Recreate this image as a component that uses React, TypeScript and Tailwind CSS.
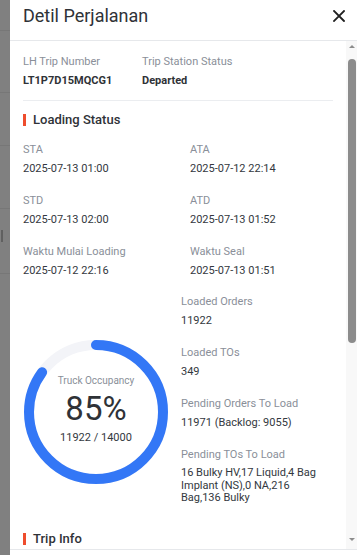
import React from "react";

const Label = ({ children }: { children: React.ReactNode }) => (
  <div className="text-[11px] leading-[14px] text-[#8a8f99]">{children}</div>
);
const Value = ({ children }: { children: React.ReactNode }) => (
  <div className="mt-[5px] text-[11px] leading-[14px] text-[#333840]">{children}</div>
);

const SectionTitle = ({ children }: { children: React.ReactNode }) => (
  <div className="flex items-center gap-[7px]">
    <div className="h-[12px] w-[3px] bg-[#ee4d2d]" />
    <div className="text-[13px] leading-[16px] font-medium text-[#2f3237]">{children}</div>
  </div>
);

function Ring() {
  const r = 67;
  const c = 2 * Math.PI * r;
  const pct = 0.85;
  return (
    <div className="relative h-[146px] w-[146px]">
      <svg width="146" height="146" viewBox="0 0 146 146" className="absolute inset-0">
        <circle cx="73" cy="73" r={r} fill="none" stroke="#f3f4f8" strokeWidth="10" />
        <circle
          cx="73"
          cy="73"
          r={r}
          fill="none"
          stroke="#3377f6"
          strokeWidth="10"
          strokeLinecap="round"
          strokeDasharray={`${c * pct} ${c}`}
          transform="rotate(-90 73 73)"
        />
      </svg>
      <div className="absolute inset-0 flex flex-col items-center justify-center">
        <div className="text-[10px] leading-[12px] text-[#8a8f99] -mt-[4px]">Truck Occupancy</div>
        <div className="mt-[4px] text-[33px] leading-[36px] text-[#2f3237]">85%</div>
        <div className="mt-[4px] text-[11px] leading-[14px] text-[#333840]">11922 / 14000</div>
      </div>
    </div>
  );
}

export default function App() {
  return (
    <div
      className="flex h-[555px] w-[357px] overflow-hidden"
      style={{ fontFamily: "Roboto, 'Noto Sans', sans-serif" }}
    >
      <div className="relative w-[10px] shrink-0 bg-[#808080]">
        <div className="absolute left-0 right-0 top-[30px] h-px bg-[#777]" />
        <div className="absolute left-0 right-0 top-[92px] h-px bg-[#777]" />
        <div className="absolute left-0 right-0 top-[145px] h-px bg-[#777]" />
        <div className="absolute left-0 right-0 top-[208px] h-px bg-[#777]" />
        <div className="absolute left-0 right-0 top-[273px] h-px bg-[#777]" />
        <div className="absolute left-[1px] top-[230px] h-[12px] w-[2px] bg-[#606060]" />
      </div>
      <div className="flex min-w-0 flex-1 flex-col bg-white">
        <div className="flex h-[41px] shrink-0 items-start justify-between border-b border-[#e6e8eb] pl-[13px] pr-[10px] pt-[5px]">
          <div className="text-[18px] leading-[22px] text-[#2f3237]">Detil Perjalanan</div>
          <svg width="12" height="12" viewBox="0 0 12 12" className="mr-[2px] mt-[5px]">
            <path d="M1 1L11 11M11 1L1 11" stroke="#1f1f1f" strokeWidth="1.8" strokeLinecap="square" />
          </svg>
        </div>
        <div className="flex min-h-0 flex-1">
          <div className="min-w-0 flex-1 px-[13px] pt-[14px]">
            <div className="flex border-b border-[#ebedf0] pb-[12px]">
              <div className="w-[119px]">
                <Label>LH Trip Number</Label>
                <div className="mt-[5px] text-[11px] leading-[14px] font-bold text-[#2f3237]">LT1P7D15MQCG1</div>
              </div>
              <div>
                <Label>Trip Station Status</Label>
                <div className="mt-[5px] text-[11px] leading-[14px] font-bold text-[#2f3237]">Departed</div>
              </div>
            </div>
            <div className="mt-[11px]">
              <SectionTitle>Loading Status</SectionTitle>
            </div>
            <div className="mt-[15px] grid grid-cols-[167px_1fr] gap-y-[18px] gap-x-0">
              <div>
                <Label>STA</Label>
                <Value>2025-07-13 01:00</Value>
              </div>
              <div>
                <Label>ATA</Label>
                <Value>2025-07-12 22:14</Value>
              </div>
              <div>
                <Label>STD</Label>
                <Value>2025-07-13 02:00</Value>
              </div>
              <div>
                <Label>ATD</Label>
                <Value>2025-07-13 01:52</Value>
              </div>
              <div>
                <Label>Waktu Mulai Loading</Label>
                <Value>2025-07-12 22:16</Value>
              </div>
              <div>
                <Label>Waktu Seal</Label>
                <Value>2025-07-13 01:51</Value>
              </div>
            </div>
            <div className="mt-[17px] flex">
              <div className="w-[158px] shrink-0 pt-[44px]">
                <Ring />
              </div>
              <div className="flex w-[142px] flex-col gap-[18px]">
                <div>
                  <Label>Loaded Orders</Label>
                  <Value>11922</Value>
                </div>
                <div>
                  <Label>Loaded TOs</Label>
                  <Value>349</Value>
                </div>
                <div>
                  <Label>Pending Orders To Load</Label>
                  <Value>11971 (Backlog: 9055)</Value>
                </div>
                <div>
                  <Label>Pending TOs To Load</Label>
                  <div className="mt-[5px] text-[11px] leading-[12.5px] text-[#333840]">
                    16 Bulky HV,17 Liquid,4 Bag Implant (NS),0 NA,216 Bag,136 Bulky
                  </div>
                </div>
              </div>
            </div>
            <div className="mt-[26px]">
              <SectionTitle>Trip Info</SectionTitle>
            </div>
          </div>
          <div className="relative w-[11px] shrink-0 bg-[#f8f8f8]">
            <div className="absolute left-[3px] top-[4px] h-0 w-0 border-x-[3px] border-b-[3px] border-x-transparent border-b-[#8c8c8c]" />
            <div className="absolute left-[2px] top-[18px] h-[284px] w-[8px] rounded-[4px] bg-[#8c8c8c]" />
            <div className="absolute left-[3px] bottom-[8px] h-0 w-0 border-x-[3px] border-t-[3px] border-x-transparent border-t-[#8c8c8c]" />
          </div>
        </div>
        <div className="h-[6px] shrink-0 border-t border-[#e6e8eb]" />
      </div>
    </div>
  );
}
